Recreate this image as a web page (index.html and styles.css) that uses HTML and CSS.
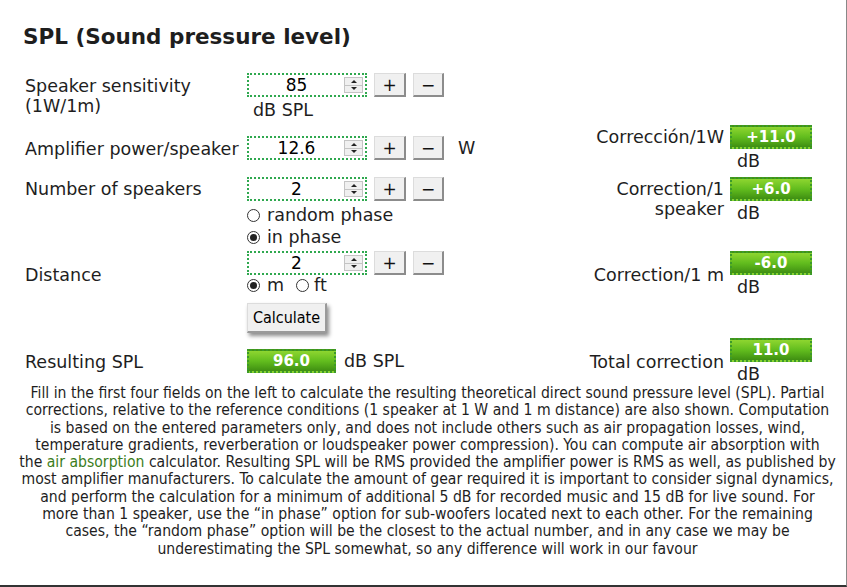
FILE: index.html
```html
<!DOCTYPE HTML>
<html>
<head>
<meta charset="utf-8">
<title>SPL (Sound pressure level)</title>
<link rel="stylesheet" href="styles.css">
</head>
<body>
	<div id="page">
		<h1>SPL (Sound pressure level)</h1>
		<div id="calc">
			<!-- fila 1 -->
			<div class="lbl r1 t3">Speaker sensitivity (1W/1m)</div>
			<div class="fld r1">
				<div class="line">
					<div class="num"><span class="val">85</span><span class="spin"><i class="up"></i><i class="dn"></i></span></div>
					<span class="btn">+</span><span class="btn">&minus;</span>
				</div>
				<div class="unit">dB SPL</div>
			</div>
			<!-- fila 2 -->
			<div class="lbl r2 t14">Amplifier power/speaker</div>
			<div class="fld r2 t11">
				<div class="line">
					<div class="num"><span class="val">12.6</span><span class="spin"><i class="up"></i><i class="dn"></i></span></div>
					<span class="btn">+</span><span class="btn">&minus;</span>
					<span class="w">W</span>
				</div>
			</div>
			<div class="clbl r2 t2">Corrección/1W</div>
			<div class="cval r2">
				<div class="res">+11.0</div>
				<div class="db">dB</div>
			</div>
			<!-- fila 3 -->
			<div class="lbl r3 t2">Number of speakers</div>
			<div class="fld r3">
				<div class="line">
					<div class="num"><span class="val">2</span><span class="spin"><i class="up"></i><i class="dn"></i></span></div>
					<span class="btn">+</span><span class="btn">&minus;</span>
				</div>
				<div class="radios"><span class="radio"></span>random phase</div>
				<div class="radios"><span class="radio on"></span>in phase</div>
			</div>
			<div class="clbl r3 t2">Correction/1 speaker</div>
			<div class="cval r3">
				<div class="res">+6.0</div>
				<div class="db">dB</div>
			</div>
			<!-- fila 4 -->
			<div class="lbl r4 t14">Distance</div>
			<div class="fld r4">
				<div class="line">
					<div class="num"><span class="val">2</span><span class="spin"><i class="up"></i><i class="dn"></i></span></div>
					<span class="btn">+</span><span class="btn">&minus;</span>
				</div>
				<div class="radios tight"><span class="radio on"></span>m<span class="radio gap"></span>ft</div>
			</div>
			<div class="clbl r4 t14">Correction/1 m</div>
			<div class="cval r4">
				<div class="res">-6.0</div>
				<div class="db">dB</div>
			</div>
			<!-- fila 5 -->
			<div class="fld r5"><span class="calcbtn">Calculate</span></div>
			<!-- fila 6 -->
			<div class="lbl r6 t14">Resulting SPL</div>
			<div class="fld r6 t11">
				<div class="line">
					<div class="res big">96.0</div>
					<span class="w2">dB SPL</span>
				</div>
			</div>
			<div class="clbl r6 t14">Total correction</div>
			<div class="cval r6">
				<div class="res">11.0</div>
				<div class="db">dB</div>
			</div>
		</div>
		<p class="note">Fill in the first four fields on the left to calculate the resulting theoretical direct sound pressure level (SPL). Partial<br>corrections, relative to the reference conditions (1 speaker at 1 W and 1 m distance) are also shown. Computation<br>is based on the entered parameters only, and does not include others such as air propagation losses, wind,<br>temperature gradients, reverberation or loudspeaker power compression). You can compute air absorption with<br>the <a href="#">air absorption</a> calculator. Resulting SPL will be RMS provided the amplifier power is RMS as well, as published by<br>most amplifier manufacturers. To calculate the amount of gear required it is important to consider signal dynamics,<br>and perform the calculation for a minimum of additional 5 dB for recorded music and 15 dB for live sound. For<br>more than 1 speaker, use the “in phase” option for sub-woofers located next to each other. For the remaining<br>cases, the “random phase” option will be the closest to the actual number, and in any case we may be<br>underestimating the SPL somewhat, so any difference will work in our favour</p>
	</div>
</body>
</html>
```

FILE: styles.css
```css
*{
	margin: 0;
	padding: 0;
	box-sizing: border-box;
}
body{
	background: #fff;
	color: #1e1e1e;
	font-family: "DejaVu Sans", Verdana, sans-serif;
	font-size: 17.5px;
	line-height: 20px;
}
#page{
	width: 847px;
	height: 587px;
	border-right: 1px solid #888;
	border-bottom: 2px solid #333;
	padding-top: 24px;
}
h1{
	font-size: 21.5px;
	line-height: 26px;
	font-weight: bold;
	margin-left: 23px;
	color: #1e1e1e;
}
#calc{
	display: grid;
	grid-template-columns: 222px 333px 150px 92px;
	grid-template-rows: 52px 52px 74px 52px 35px 48px;
	margin-top: 23px;
	margin-left: 25px;
}
.r1{ grid-row: 1; }
.r2{ grid-row: 2; }
.r3{ grid-row: 3; }
.r4{ grid-row: 4; }
.r5{ grid-row: 5; }
.r6{ grid-row: 6; }
.t2{ padding-top: 2px; }
.t3{ padding-top: 3px; }
.t11{ padding-top: 11px; }
.t14{ padding-top: 14px; }
.lbl{ grid-column: 1; }
.fld{ grid-column: 2; }
.clbl{
	grid-column: 3;
	text-align: right;
	padding-right: 6px;
}
.cval{ grid-column: 4; }

.line{
	display: flex;
	align-items: center;
	height: 24px;
}
.num{
	width: 120px;
	height: 24px;
	border: 2px dotted #2fa84f;
	display: flex;
	align-items: center;
	padding-right: 2px;
	font-size: 17px;
	color: #000;
}
.val{
	flex: 1;
	text-align: center;
}
.spin{
	width: 19px;
	height: 16px;
	border: 1px solid #c4c4c4;
	background: #f0f0f0;
	display: flex;
	flex-direction: column;
}
.spin i{
	flex: 1;
	display: flex;
	align-items: center;
	justify-content: center;
}
.spin i.up{ border-bottom: 1px solid #c4c4c4; }
.spin i::after{
	content: "";
	border-left: 3px solid transparent;
	border-right: 3px solid transparent;
}
.spin i.up::after{ border-bottom: 3px solid #222; }
.spin i.dn::after{ border-top: 3px solid #222; }
.btn{
	width: 32px;
	height: 24px;
	margin-left: 7px;
	background: #f0f0f0;
	border: 1px solid #dcdcdc;
	border-right: 2px solid #8c8c8c;
	border-bottom: 2px solid #8c8c8c;
	display: flex;
	align-items: center;
	justify-content: center;
	font-size: 17px;
	color: #111;
}
.btn + .btn{ width: 31px; }
.w{ margin-left: 14px; }
.w2{ margin-left: 8px; }
.unit{
	margin-top: 3px;
	padding-left: 6px;
}
.radios{
	display: flex;
	align-items: center;
	height: 22px;
	margin-top: 3px;
}
.radios + .radios{ margin-top: 0; }
.radios.tight{ margin-top: 1px; height: 18px; }
.radio{
	width: 13px;
	height: 13px;
	border: 1px solid #333;
	border-radius: 50%;
	margin-right: 7px;
	background: #fff;
	display: flex;
	align-items: center;
	justify-content: center;
}
.radio.on::after{
	content: "";
	width: 7px;
	height: 7px;
	border-radius: 50%;
	background: #222;
}
.radio.gap{ margin-left: 12px; margin-right: 5px; }
.res{
	width: 82px;
	height: 24px;
	background: linear-gradient(#8ed630, #62bd1e 50%, #3f8f12);
	border: 2px dotted #3c9a2a;
	color: #fff;
	font-weight: bold;
	font-size: 15px;
	line-height: 20px;
	text-align: center;
}
.res.big{ width: 89px; }
.db{
	margin-top: 2px;
	padding-left: 7px;
}
.calcbtn{
	display: inline-block;
	width: 80px;
	height: 30px;
	background: #f0f0f0;
	border: 1px solid #dcdcdc;
	border-right: 2px solid #9a9a9a;
	border-bottom: 2px solid #9a9a9a;
	box-shadow: 2px 3px 4px rgba(0, 0, 0, .45);
	font-family: "DejaVu Sans Condensed", "DejaVu Sans", sans-serif;
	font-size: 16px;
	line-height: 27px;
	text-align: center;
	color: #000;
}
.note{
	margin: -1px 8px 0 17px;
	font-family: "DejaVu Sans Condensed", "DejaVu Sans", sans-serif;
	font-size: 15.6px;
	line-height: 17.3px;
	text-align: center;
	color: #1e1e1e;
}
.note a{
	color: #3b7d1c;
	text-decoration: none;
}
```
